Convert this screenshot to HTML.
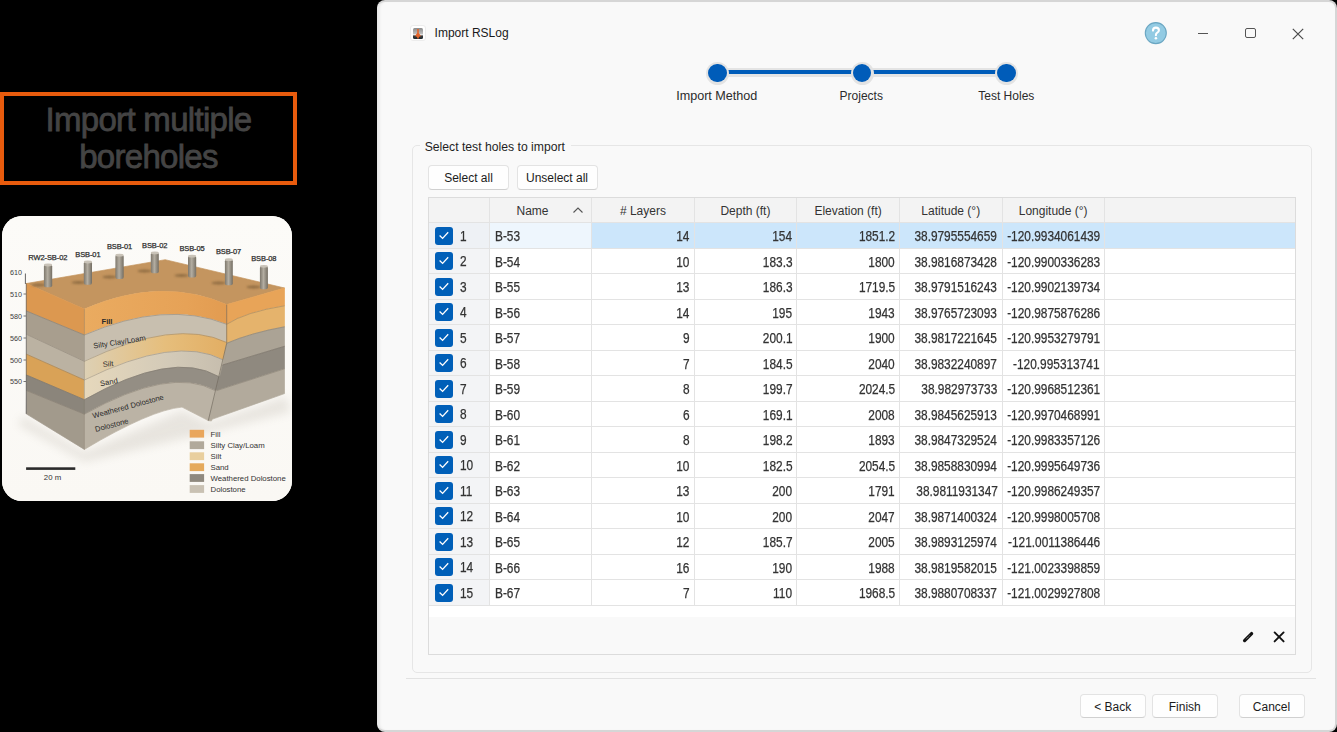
<!DOCTYPE html>
<html><head><meta charset="utf-8">
<style>
*{margin:0;padding:0;box-sizing:border-box}
html,body{width:1337px;height:732px;overflow:hidden;background:#000;font-family:"Liberation Sans",sans-serif;color:#1b1b1b}
.abs{position:absolute}
#hl{left:0;top:92px;width:297px;height:93px;border:4px solid #e85b0d;}
#hl div{position:absolute;left:0;width:289px;text-align:center;color:#444;font-size:33px;letter-spacing:-0.7px;-webkit-text-stroke:0.8px #444;white-space:nowrap;line-height:36px}
#img{left:1.5px;top:216px;width:290px;height:285px;border-radius:20px;background:#fcfbf8;overflow:hidden}
#dlg{left:377px;top:0;width:960px;height:732px;background:#f9f9f9;border-radius:8px;border:2px solid #d6d6d6;border-left:1px solid #e8e8e8;box-shadow:inset 3px 0 2px -1px #ebebeb}
.t{position:absolute;white-space:nowrap;font-size:12px;color:#1f1f1f;line-height:14px}
.hd{text-align:center;color:#333}
.td{color:#333;font-size:13.8px;line-height:15px;-webkit-text-stroke:0.25px #333}
.sl{transform:scaleX(.86);transform-origin:0 0}
.sr{transform:scaleX(.86);transform-origin:100% 0}
.btn{position:absolute;background:#fefefe;border:1px solid #e3e3e3;border-bottom-color:#d0d0d0;border-radius:4px;font-size:12px;text-align:center;color:#1b1b1b;line-height:25px}
.hl{left:429px;width:866px;height:1px;background:#e3e3e3}
.vl{width:1px;background:#e3e3e3}
.cb{width:18px;height:18px;border-radius:3px;background:#005fb8}
.cb svg{display:block}
</style></head>
<body>
<div id="hl" class="abs">
  <div style="top:6px">Import multiple</div>
  <div style="top:43.3px">boreholes</div>
</div>
<div id="img" class="abs">
<svg width="290" height="285" viewBox="1.5 216 290 285" style="display:block;font-family:'Liberation Sans',sans-serif">
<defs>
  <filter id="blur2" x="-50%" y="-100%" width="200%" height="300%"><feGaussianBlur stdDeviation="1.3"/></filter>
  <filter id="blur4" x="-50%" y="-50%" width="200%" height="200%"><feGaussianBlur stdDeviation="5"/></filter>
  <linearGradient id="bg" x1="0" y1="0" x2="0" y2="1"><stop offset="0" stop-color="#fcfbf8"/><stop offset="1" stop-color="#faf8f4"/></linearGradient>
  <linearGradient id="cyl" x1="0" y1="0" x2="1" y2="0"><stop offset="0" stop-color="#7d776c"/><stop offset="0.45" stop-color="#b3ada1"/><stop offset="1" stop-color="#746e63"/></linearGradient>
  <linearGradient id="siltm" x1="0" y1="0" x2="1" y2="0"><stop offset="0" stop-color="#ddd0b4"/><stop offset="0.55" stop-color="#e6be7c"/><stop offset="1" stop-color="#e2ad62"/></linearGradient>
  <linearGradient id="sandm" x1="0" y1="0" x2="1" y2="0"><stop offset="0" stop-color="#e6d8bc"/><stop offset="0.6" stop-color="#d3cab8"/><stop offset="1" stop-color="#c6bdad"/></linearGradient>
  <linearGradient id="fillm" x1="0" y1="0" x2="1" y2="0"><stop offset="0" stop-color="#eaab60"/><stop offset="0.7" stop-color="#e6a257"/><stop offset="1" stop-color="#e29b50"/></linearGradient>
</defs>
<rect x="1.5" y="216" width="290" height="285" fill="url(#bg)"/>
<!-- shadow -->
<path d="M22 416 L84 452 L182 410 L208 423 L286 396 L290 412 L210 432 L84 462 L18 425 Z" fill="#8a8070" opacity="0.16" filter="url(#blur4)"/>
<!-- axis -->
<path d="M24.9 273.5 V284" stroke="#555" stroke-width="0.9"/>
<g fill="#3a3a3a" font-size="7.2" text-anchor="end">
<text x="21.5" y="275">610</text><text x="21.5" y="296.6">510</text><text x="21.5" y="318.6">580</text><text x="21.5" y="340.6">560</text><text x="21.5" y="362.6">500</text><text x="21.5" y="384">550</text>
</g>
<g stroke="#555" stroke-width="0.8"><path d="M23 294 H25.5 M23 316 H25.5 M23 338 H25.5 M23 360 H25.5 M23 381.5 H25.5"/></g>
<!-- top surface -->
<path d="M25.9 283.5 L164.7 259.7 L284 288 L226.2 304.6 Q160 276 83.9 309.1 Z" fill="#c4955f" stroke="#c4955f" stroke-width="0.7" stroke-linejoin="round"/>
<!-- left face layers -->
<path d="M25.9 283.5 L83.9 309.1 L83.9 335 L25.9 311 Z" fill="#dc9850" stroke="#dc9850" stroke-width="0.7" stroke-linejoin="round"/>
<path d="M25.9 311 L83.9 335 L83.9 361.3 L25.9 334.3 Z" fill="#a89e8e" stroke="#a89e8e" stroke-width="0.7" stroke-linejoin="round"/>
<path d="M25.9 334.3 L83.9 361.3 L83.9 380 L25.9 354.2 Z" fill="#bbb2a2" stroke="#bbb2a2" stroke-width="0.7" stroke-linejoin="round"/>
<path d="M25.9 354.2 L83.9 380 L83.9 399.7 L25.9 375 Z" fill="#d9a257" stroke="#d9a257" stroke-width="0.7" stroke-linejoin="round"/>
<path d="M25.9 375 L83.9 399.7 L83.9 414.2 L25.9 390.5 Z" fill="#8b857b" stroke="#8b857b" stroke-width="0.7" stroke-linejoin="round"/>
<path d="M25.9 390.5 L83.9 414.2 L83.9 449.4 L25.7 413.8 Z" fill="#a29a8c" stroke="#a29a8c" stroke-width="0.7" stroke-linejoin="round"/>
<!-- middle face layers -->
<path d="M83.9 309.1 Q160 276 226.2 304.6 L230 305 L230 324.3 L226.2 324.3 Q165 300 83.9 335 Z" fill="url(#fillm)" stroke="url(#fillm)" stroke-width="0.7" stroke-linejoin="round"/>
<path d="M83.9 335 Q165 300 226.2 324.3 L230 324.3 L230 342.5 L226.2 342.5 Q175 318 83.9 361.3 Z" fill="#c8bfaf" stroke="#c8bfaf" stroke-width="0.7" stroke-linejoin="round"/>
<path d="M83.9 361.3 Q175 318 226.2 342.5 L230 342.5 L228 359.8 L222.5 359.8 Q175 335 83.9 380 Z" fill="url(#siltm)" stroke="url(#siltm)" stroke-width="0.7" stroke-linejoin="round"/>
<path d="M83.9 380 Q175 335 222.5 359.8 L226 359.8 L223 376.3 L217.6 376.3 Q172 350 83.9 399.7 Z" fill="url(#sandm)" stroke="url(#sandm)" stroke-width="0.7" stroke-linejoin="round"/>
<path d="M83.9 399.7 Q172 350 217.6 376.3 L222 376.3 L220 390.6 L214.6 390.6 Q170 366 83.9 414.2 Z" fill="#948e84" stroke="#948e84" stroke-width="0.7" stroke-linejoin="round"/>
<path d="M83.9 414.2 Q170 366 214.6 390.6 L219 390.6 L211 421 L207.8 420.6 L181.5 407.1 Q150 410 83.9 449.4 Z" fill="#bbb3a5" stroke="#bbb3a5" stroke-width="0.7" stroke-linejoin="round"/>
<!-- right face layers -->
<path d="M226.2 304.6 L284 288 L284 305.8 Q245 312 226.2 324.3 Z" fill="#e8a458" stroke="#e8a458" stroke-width="0.7" stroke-linejoin="round"/>
<path d="M226.2 324.3 Q245 312 284 305.8 L284 326.8 Q250 333 226.2 343.3 Z" fill="#e5b36c" stroke="#e5b36c" stroke-width="0.7" stroke-linejoin="round"/>
<path d="M226.2 343.3 Q250 333 284 326.8 L284 346.3 L222.1 365 Z" fill="#aba395" stroke="#aba395" stroke-width="0.7" stroke-linejoin="round"/>
<path d="M222.1 365 L284 346.3 L284 368.8 L216.1 390.6 Z" fill="#8f897f" stroke="#8f897f" stroke-width="0.7" stroke-linejoin="round"/>
<path d="M216.1 390.6 L284 368.8 L284 393.6 L207.8 420.6 Z" fill="#b2aa9c" stroke="#b2aa9c" stroke-width="0.7" stroke-linejoin="round"/>
<!-- layer lines -->
<g fill="none" stroke="#6f675c" stroke-width="0.45" opacity="0.8">
<path d="M25.9 311 L83.9 335 Q165 300 226.2 324.3 Q245 312 284 305.8"/>
<path d="M25.9 334.3 L83.9 361.3 Q175 318 226.2 342.5"/>
<path d="M25.9 354.2 L83.9 380 Q175 335 222.5 359.8"/>
<path d="M25.9 375 L83.9 399.7 Q172 350 217.6 376.3"/>
<path d="M25.9 390.5 L83.9 414.2 Q170 366 214.6 390.6"/>
<path d="M226.2 343.3 Q250 333 284 326.8 M222.1 365 L284 346.3 M216.1 390.6 L284 368.8"/>
<path d="M83.9 309.1 V449.4"/><path d="M25.8 283.5 V413.8" stroke="#555" stroke-width="0.8"/><path d="M226.2 304.6 V343.3 L207.8 420.6" stroke-width="0.8"/>
</g>
<!-- cylinder shadows -->
<g fill="#5e4628" opacity="0.5" filter="url(#blur2)">
<ellipse cx="38" cy="285" rx="7" ry="1.5"/><ellipse cx="78" cy="282.5" rx="7" ry="1.5"/><ellipse cx="109" cy="277" rx="7" ry="1.5"/><ellipse cx="144" cy="271" rx="7" ry="1.5"/><ellipse cx="181" cy="275.5" rx="7" ry="1.5"/><ellipse cx="218" cy="283" rx="7" ry="1.5"/><ellipse cx="253" cy="287" rx="7" ry="1.5"/>
</g>
<!-- cylinders -->
<g fill="url(#cyl)">
<rect x="43.4" y="264.6" width="8.3" height="22.6" rx="2"/>
<rect x="83.3" y="261.5" width="8.2" height="23.2" rx="2"/>
<rect x="114.9" y="254.8" width="8.3" height="24.2" rx="2"/>
<rect x="150.3" y="252.5" width="8" height="20.7" rx="2"/>
<rect x="187.5" y="255.8" width="8.2" height="21.8" rx="2"/>
<rect x="224.4" y="259.3" width="7.9" height="26" rx="2"/>
<rect x="259.4" y="265.9" width="8" height="23.3" rx="2"/>
</g>
<g fill="#c9c3b8">
<ellipse cx="47.55" cy="265" rx="4.1" ry="1.4"/><ellipse cx="87.4" cy="262" rx="4.1" ry="1.4"/><ellipse cx="119" cy="255.2" rx="4.1" ry="1.4"/><ellipse cx="154.3" cy="252.9" rx="4" ry="1.4"/><ellipse cx="191.6" cy="256.2" rx="4.1" ry="1.4"/><ellipse cx="228.3" cy="259.7" rx="3.9" ry="1.4"/><ellipse cx="263.4" cy="266.3" rx="4" ry="1.4"/>
</g>
<!-- borehole labels -->
<g fill="#2e2e2e" font-size="7.5" text-anchor="middle" stroke="#2e2e2e" stroke-width="0.25" letter-spacing="-0.1">
<text x="47.3" y="260">RW2-SB-02</text><text x="87.4" y="256.5">BSB-01</text><text x="119" y="249">BSB-01</text><text x="154.2" y="248">BSB-02</text><text x="191.5" y="251.2">BSB-05</text><text x="228" y="254.3">BSB-07</text><text x="263.3" y="260.6">BSB-08</text>
</g>
<!-- layer labels -->
<g fill="#2a2a2a" font-size="7.6">
<text x="101" y="323.5" font-weight="bold">Fill</text>
<text x="119" y="344.5" text-anchor="middle" transform="rotate(-9 119 341.8)">Silty Clay/Loam</text>
<text x="107.5" y="366.5" text-anchor="middle" transform="rotate(-6 107.5 364)">Silt</text>
<text x="108.4" y="384.7" text-anchor="middle" transform="rotate(-10 108.4 382)">Sand</text>
<text x="127.6" y="409" text-anchor="middle" transform="rotate(-15 127.6 406.4)">Weathered Dolostone</text>
<text x="111.2" y="427.6" text-anchor="middle" transform="rotate(-15 111.2 425)">Dolostone</text>
</g>
<!-- legend -->
<g>
<rect x="189.2" y="429.8" width="14.4" height="7.8" fill="#e9a65c"/>
<rect x="189.2" y="441.3" width="14.4" height="7.8" fill="#b1a99b"/>
<rect x="189.2" y="452.3" width="14.4" height="7.8" fill="#e9cf9e"/>
<rect x="189.2" y="463.3" width="14.4" height="7.8" fill="#e5aa5c"/>
<rect x="189.2" y="474.1" width="14.4" height="7.8" fill="#8f897f"/>
<rect x="189.2" y="485.1" width="14.4" height="7.8" fill="#c9c1b3"/>
</g>
<g fill="#333" font-size="7.8">
<text x="210" y="436.5">Fill</text><text x="210" y="448">Silty Clay/Loam</text><text x="210" y="459">Silt</text><text x="210" y="470">Sand</text><text x="210" y="480.8">Weathered Dolostone</text><text x="210" y="491.8">Dolostone</text>
</g>
<!-- scale bar -->
<rect x="25.6" y="467.3" width="49.2" height="2.6" fill="#2b2b2b"/>
<text x="52" y="479.5" font-size="7.8" fill="#333" text-anchor="middle">20 m</text>
</svg>
</div>
<div id="dlg" class="abs"></div>
<!-- title -->
<div class="abs" style="left:410px;top:25px;width:16px;height:16px;background:#fff;border:1px solid #ececec;border-radius:3px"></div>
<svg class="abs" style="left:413px;top:27.5px" width="10" height="11" viewBox="0 0 10 11"><defs><linearGradient id="ig" x1="0" y1="0" x2="0" y2="1"><stop offset="0" stop-color="#8c8c8c"/><stop offset="0.5" stop-color="#bdbdbd"/><stop offset="0.62" stop-color="#eeeeee"/><stop offset="0.72" stop-color="#3a3a3a"/><stop offset="1" stop-color="#1e2a30"/></linearGradient></defs><rect x="0" y="0" width="10" height="11" rx="1.5" fill="url(#ig)"/><path d="M4.2 1 H5.8 V5 L8 8 L5.8 9 V10.5 H4.2 V9 L2 8 L4.2 5 Z" fill="#e3652c"/></svg>
<div class="t" style="left:434.6px;top:26px;font-size:12px;color:#1a1a1a">Import RSLog</div>
<!-- help -->
<svg class="abs" style="left:1144px;top:21px" width="24" height="24" viewBox="0 0 24 24"><circle cx="11.8" cy="12.1" r="10.5" fill="#93cbe3" stroke="#6aa6c2" stroke-width="1.1"/><path d="M9 9.6 Q9 6.6 11.9 6.6 Q14.9 6.6 14.9 9.3 Q14.9 11 13 11.9 Q11.9 12.5 11.9 14.3" fill="none" stroke="#fff" stroke-width="2.1" stroke-linecap="round"/><circle cx="11.9" cy="17.2" r="1.3" fill="#fff"/></svg>
<!-- min max close -->
<div class="abs" style="left:1198px;top:32.7px;width:10px;height:1.2px;background:#555"></div>
<div class="abs" style="left:1245px;top:28px;width:10.8px;height:10px;border:1.4px solid #555;border-radius:2px"></div>
<svg class="abs" style="left:1292px;top:27.5px" width="12" height="12" viewBox="0 0 12 12"><path d="M0.8 0.8 L11.2 11.2 M11.2 0.8 L0.8 11.2" stroke="#4a4a4a" stroke-width="1.2"/></svg>
<!-- stepper -->
<div class="abs" style="left:717px;top:67.6px;width:290px;height:9px;background:#e4e4e4;border-radius:4px"></div>
<div class="abs" style="left:717px;top:70.4px;width:290px;height:3.8px;background:#005cb9"></div>
<div class="abs" style="left:705.8px;top:61.5px;width:23px;height:23px;border-radius:50%;background:#e3e3e3"></div>
<div class="abs" style="left:707.9px;top:63.6px;width:18.8px;height:18.8px;border-radius:50%;background:#005cb9"></div>
<div class="abs" style="left:850.5px;top:61.5px;width:23px;height:23px;border-radius:50%;background:#e3e3e3"></div>
<div class="abs" style="left:852.6px;top:63.6px;width:18.8px;height:18.8px;border-radius:50%;background:#005cb9"></div>
<div class="abs" style="left:995.0px;top:61.5px;width:23px;height:23px;border-radius:50%;background:#e3e3e3"></div>
<div class="abs" style="left:997.1px;top:63.6px;width:18.8px;height:18.8px;border-radius:50%;background:#005cb9"></div>
<div class="t" style="left:656.75px;top:89px;width:120px;text-align:center;color:#2b2b2b;font-size:12.6px">Import Method</div>
<div class="t" style="left:801.3px;top:89px;width:120px;text-align:center;color:#2b2b2b;">Projects</div>
<div class="t" style="left:946.3px;top:89px;width:120px;text-align:center;color:#2b2b2b;">Test Holes</div>
<!-- group box -->
<div class="abs" style="left:411.5px;top:145px;width:900px;height:528px;border:1px solid #e6e6e6;border-radius:5px"></div>
<div class="abs" style="left:420px;top:140px;width:151px;height:10px;background:#f9f9f9"></div>
<div class="t" style="left:424.7px;top:140px;color:#1f1f1f;font-size:12.2px">Select test holes to import</div>
<div class="btn" style="left:428px;top:165px;width:81px;height:25px">Select all</div>
<div class="btn" style="left:516.5px;top:165px;width:81px;height:25px">Unselect all</div>
<div class="abs" style="left:428px;top:197px;width:868px;height:458px;border:1px solid #dcdcdc;background:#f9f9f9"></div>
<div class="abs" style="left:429px;top:198px;width:866px;height:24.5px;background:#f3f3f3"></div>
<div class="abs" style="left:429px;top:222.5px;width:866px;height:394.5px;background:#fff"></div>
<div class="abs" style="left:429px;top:222.5px;width:60.5px;height:382.5px;background:#f3f4f6"></div>
<div class="abs" style="left:591.7px;top:222.5px;width:512.5999999999999px;height:25.5px;background:#cce6fb"></div>
<div class="abs" style="left:1104.3px;top:222.5px;width:190.70000000000005px;height:25.5px;background:#cce6fb"></div>
<div class="abs" style="left:489.5px;top:222.5px;width:102.20000000000005px;height:25.5px;background:#eef6fd"></div>
<div class="abs" style="left:429px;top:222.5px;width:60.5px;height:25.5px;background:#eef1f5"></div>
<div class="abs hl" style="top:222.00px"></div>
<div class="abs hl" style="top:247.50px"></div>
<div class="abs hl" style="top:273.00px"></div>
<div class="abs hl" style="top:298.50px"></div>
<div class="abs hl" style="top:324.00px"></div>
<div class="abs hl" style="top:349.50px"></div>
<div class="abs hl" style="top:375.00px"></div>
<div class="abs hl" style="top:400.50px"></div>
<div class="abs hl" style="top:426.00px"></div>
<div class="abs hl" style="top:451.50px"></div>
<div class="abs hl" style="top:477.00px"></div>
<div class="abs hl" style="top:502.50px"></div>
<div class="abs hl" style="top:528.00px"></div>
<div class="abs hl" style="top:553.50px"></div>
<div class="abs hl" style="top:579.00px"></div>
<div class="abs hl" style="top:604.50px"></div>
<div class="abs vl" style="left:489.00px;top:198px;height:407.5px"></div>
<div class="abs vl" style="left:591.20px;top:198px;height:407.5px"></div>
<div class="abs vl" style="left:693.70px;top:198px;height:407.5px"></div>
<div class="abs vl" style="left:796.20px;top:198px;height:407.5px"></div>
<div class="abs vl" style="left:899.00px;top:198px;height:407.5px"></div>
<div class="abs vl" style="left:1001.50px;top:198px;height:407.5px"></div>
<div class="abs vl" style="left:1103.80px;top:198px;height:407.5px"></div>
<div class="t hd" style="left:472.5px;width:120px;top:204px">Name</div>
<div class="t hd" style="left:582.95px;width:120px;top:204px"># Layers</div>
<div class="t hd" style="left:685.45px;width:120px;top:204px">Depth (ft)</div>
<div class="t hd" style="left:788.1px;width:120px;top:204px">Elevation (ft)</div>
<div class="t hd" style="left:890.75px;width:120px;top:204px">Latitude (°)</div>
<div class="t hd" style="left:993.1500000000001px;width:120px;top:204px">Longitude (°)</div>
<svg class="abs" style="left:572px;top:206px" width="12" height="8" viewBox="0 0 12 8"><path d="M1.5 6.5 L6 2 L10.5 6.5" fill="none" stroke="#555" stroke-width="1.1"/></svg>
<div class="abs cb" style="left:435.4px;top:226.70px"><svg width="18" height="18" viewBox="0 0 18 18"><path d="M4.6 8.5 L7.6 11.4 L13.2 5.3" fill="none" stroke="#fff" stroke-width="1.3"/></svg></div>
<div class="t td sl" style="left:460px;top:228.60px">1</div>
<div class="t td sl" style="left:495.3px;top:229.10px">B-53</div>
<div class="t td sr" style="right:647.40px;top:229.10px">14</div>
<div class="t td sr" style="right:544.90px;top:229.10px">154</div>
<div class="t td sr" style="right:442.10px;top:229.10px">1851.2</div>
<div class="t td sr" style="right:339.60px;top:229.10px">38.9795554659</div>
<div class="t td sr" style="right:237.30px;top:229.10px">-120.9934061439</div>
<div class="abs cb" style="left:435.4px;top:252.20px"><svg width="18" height="18" viewBox="0 0 18 18"><path d="M4.6 8.5 L7.6 11.4 L13.2 5.3" fill="none" stroke="#fff" stroke-width="1.3"/></svg></div>
<div class="t td sl" style="left:460px;top:254.10px">2</div>
<div class="t td sl" style="left:495.3px;top:254.60px">B-54</div>
<div class="t td sr" style="right:647.40px;top:254.60px">10</div>
<div class="t td sr" style="right:544.90px;top:254.60px">183.3</div>
<div class="t td sr" style="right:442.10px;top:254.60px">1800</div>
<div class="t td sr" style="right:339.60px;top:254.60px">38.9816873428</div>
<div class="t td sr" style="right:237.30px;top:254.60px">-120.9900336283</div>
<div class="abs cb" style="left:435.4px;top:277.70px"><svg width="18" height="18" viewBox="0 0 18 18"><path d="M4.6 8.5 L7.6 11.4 L13.2 5.3" fill="none" stroke="#fff" stroke-width="1.3"/></svg></div>
<div class="t td sl" style="left:460px;top:279.60px">3</div>
<div class="t td sl" style="left:495.3px;top:280.10px">B-55</div>
<div class="t td sr" style="right:647.40px;top:280.10px">13</div>
<div class="t td sr" style="right:544.90px;top:280.10px">186.3</div>
<div class="t td sr" style="right:442.10px;top:280.10px">1719.5</div>
<div class="t td sr" style="right:339.60px;top:280.10px">38.9791516243</div>
<div class="t td sr" style="right:237.30px;top:280.10px">-120.9902139734</div>
<div class="abs cb" style="left:435.4px;top:303.20px"><svg width="18" height="18" viewBox="0 0 18 18"><path d="M4.6 8.5 L7.6 11.4 L13.2 5.3" fill="none" stroke="#fff" stroke-width="1.3"/></svg></div>
<div class="t td sl" style="left:460px;top:305.10px">4</div>
<div class="t td sl" style="left:495.3px;top:305.60px">B-56</div>
<div class="t td sr" style="right:647.40px;top:305.60px">14</div>
<div class="t td sr" style="right:544.90px;top:305.60px">195</div>
<div class="t td sr" style="right:442.10px;top:305.60px">1943</div>
<div class="t td sr" style="right:339.60px;top:305.60px">38.9765723093</div>
<div class="t td sr" style="right:237.30px;top:305.60px">-120.9875876286</div>
<div class="abs cb" style="left:435.4px;top:328.70px"><svg width="18" height="18" viewBox="0 0 18 18"><path d="M4.6 8.5 L7.6 11.4 L13.2 5.3" fill="none" stroke="#fff" stroke-width="1.3"/></svg></div>
<div class="t td sl" style="left:460px;top:330.60px">5</div>
<div class="t td sl" style="left:495.3px;top:331.10px">B-57</div>
<div class="t td sr" style="right:647.40px;top:331.10px">9</div>
<div class="t td sr" style="right:544.90px;top:331.10px">200.1</div>
<div class="t td sr" style="right:442.10px;top:331.10px">1900</div>
<div class="t td sr" style="right:339.60px;top:331.10px">38.9817221645</div>
<div class="t td sr" style="right:237.30px;top:331.10px">-120.9953279791</div>
<div class="abs cb" style="left:435.4px;top:354.20px"><svg width="18" height="18" viewBox="0 0 18 18"><path d="M4.6 8.5 L7.6 11.4 L13.2 5.3" fill="none" stroke="#fff" stroke-width="1.3"/></svg></div>
<div class="t td sl" style="left:460px;top:356.10px">6</div>
<div class="t td sl" style="left:495.3px;top:356.60px">B-58</div>
<div class="t td sr" style="right:647.40px;top:356.60px">7</div>
<div class="t td sr" style="right:544.90px;top:356.60px">184.5</div>
<div class="t td sr" style="right:442.10px;top:356.60px">2040</div>
<div class="t td sr" style="right:339.60px;top:356.60px">38.9832240897</div>
<div class="t td sr" style="right:237.30px;top:356.60px">-120.995313741</div>
<div class="abs cb" style="left:435.4px;top:379.70px"><svg width="18" height="18" viewBox="0 0 18 18"><path d="M4.6 8.5 L7.6 11.4 L13.2 5.3" fill="none" stroke="#fff" stroke-width="1.3"/></svg></div>
<div class="t td sl" style="left:460px;top:381.60px">7</div>
<div class="t td sl" style="left:495.3px;top:382.10px">B-59</div>
<div class="t td sr" style="right:647.40px;top:382.10px">8</div>
<div class="t td sr" style="right:544.90px;top:382.10px">199.7</div>
<div class="t td sr" style="right:442.10px;top:382.10px">2024.5</div>
<div class="t td sr" style="right:339.60px;top:382.10px">38.982973733</div>
<div class="t td sr" style="right:237.30px;top:382.10px">-120.9968512361</div>
<div class="abs cb" style="left:435.4px;top:405.20px"><svg width="18" height="18" viewBox="0 0 18 18"><path d="M4.6 8.5 L7.6 11.4 L13.2 5.3" fill="none" stroke="#fff" stroke-width="1.3"/></svg></div>
<div class="t td sl" style="left:460px;top:407.10px">8</div>
<div class="t td sl" style="left:495.3px;top:407.60px">B-60</div>
<div class="t td sr" style="right:647.40px;top:407.60px">6</div>
<div class="t td sr" style="right:544.90px;top:407.60px">169.1</div>
<div class="t td sr" style="right:442.10px;top:407.60px">2008</div>
<div class="t td sr" style="right:339.60px;top:407.60px">38.9845625913</div>
<div class="t td sr" style="right:237.30px;top:407.60px">-120.9970468991</div>
<div class="abs cb" style="left:435.4px;top:430.70px"><svg width="18" height="18" viewBox="0 0 18 18"><path d="M4.6 8.5 L7.6 11.4 L13.2 5.3" fill="none" stroke="#fff" stroke-width="1.3"/></svg></div>
<div class="t td sl" style="left:460px;top:432.60px">9</div>
<div class="t td sl" style="left:495.3px;top:433.10px">B-61</div>
<div class="t td sr" style="right:647.40px;top:433.10px">8</div>
<div class="t td sr" style="right:544.90px;top:433.10px">198.2</div>
<div class="t td sr" style="right:442.10px;top:433.10px">1893</div>
<div class="t td sr" style="right:339.60px;top:433.10px">38.9847329524</div>
<div class="t td sr" style="right:237.30px;top:433.10px">-120.9983357126</div>
<div class="abs cb" style="left:435.4px;top:456.20px"><svg width="18" height="18" viewBox="0 0 18 18"><path d="M4.6 8.5 L7.6 11.4 L13.2 5.3" fill="none" stroke="#fff" stroke-width="1.3"/></svg></div>
<div class="t td sl" style="left:460px;top:458.10px">10</div>
<div class="t td sl" style="left:495.3px;top:458.60px">B-62</div>
<div class="t td sr" style="right:647.40px;top:458.60px">10</div>
<div class="t td sr" style="right:544.90px;top:458.60px">182.5</div>
<div class="t td sr" style="right:442.10px;top:458.60px">2054.5</div>
<div class="t td sr" style="right:339.60px;top:458.60px">38.9858830994</div>
<div class="t td sr" style="right:237.30px;top:458.60px">-120.9995649736</div>
<div class="abs cb" style="left:435.4px;top:481.70px"><svg width="18" height="18" viewBox="0 0 18 18"><path d="M4.6 8.5 L7.6 11.4 L13.2 5.3" fill="none" stroke="#fff" stroke-width="1.3"/></svg></div>
<div class="t td sl" style="left:460px;top:483.60px">11</div>
<div class="t td sl" style="left:495.3px;top:484.10px">B-63</div>
<div class="t td sr" style="right:647.40px;top:484.10px">13</div>
<div class="t td sr" style="right:544.90px;top:484.10px">200</div>
<div class="t td sr" style="right:442.10px;top:484.10px">1791</div>
<div class="t td sr" style="right:339.60px;top:484.10px">38.9811931347</div>
<div class="t td sr" style="right:237.30px;top:484.10px">-120.9986249357</div>
<div class="abs cb" style="left:435.4px;top:507.20px"><svg width="18" height="18" viewBox="0 0 18 18"><path d="M4.6 8.5 L7.6 11.4 L13.2 5.3" fill="none" stroke="#fff" stroke-width="1.3"/></svg></div>
<div class="t td sl" style="left:460px;top:509.10px">12</div>
<div class="t td sl" style="left:495.3px;top:509.60px">B-64</div>
<div class="t td sr" style="right:647.40px;top:509.60px">10</div>
<div class="t td sr" style="right:544.90px;top:509.60px">200</div>
<div class="t td sr" style="right:442.10px;top:509.60px">2047</div>
<div class="t td sr" style="right:339.60px;top:509.60px">38.9871400324</div>
<div class="t td sr" style="right:237.30px;top:509.60px">-120.9998005708</div>
<div class="abs cb" style="left:435.4px;top:532.70px"><svg width="18" height="18" viewBox="0 0 18 18"><path d="M4.6 8.5 L7.6 11.4 L13.2 5.3" fill="none" stroke="#fff" stroke-width="1.3"/></svg></div>
<div class="t td sl" style="left:460px;top:534.60px">13</div>
<div class="t td sl" style="left:495.3px;top:535.10px">B-65</div>
<div class="t td sr" style="right:647.40px;top:535.10px">12</div>
<div class="t td sr" style="right:544.90px;top:535.10px">185.7</div>
<div class="t td sr" style="right:442.10px;top:535.10px">2005</div>
<div class="t td sr" style="right:339.60px;top:535.10px">38.9893125974</div>
<div class="t td sr" style="right:237.30px;top:535.10px">-121.0011386446</div>
<div class="abs cb" style="left:435.4px;top:558.20px"><svg width="18" height="18" viewBox="0 0 18 18"><path d="M4.6 8.5 L7.6 11.4 L13.2 5.3" fill="none" stroke="#fff" stroke-width="1.3"/></svg></div>
<div class="t td sl" style="left:460px;top:560.10px">14</div>
<div class="t td sl" style="left:495.3px;top:560.60px">B-66</div>
<div class="t td sr" style="right:647.40px;top:560.60px">16</div>
<div class="t td sr" style="right:544.90px;top:560.60px">190</div>
<div class="t td sr" style="right:442.10px;top:560.60px">1988</div>
<div class="t td sr" style="right:339.60px;top:560.60px">38.9819582015</div>
<div class="t td sr" style="right:237.30px;top:560.60px">-121.0023398859</div>
<div class="abs cb" style="left:435.4px;top:583.70px"><svg width="18" height="18" viewBox="0 0 18 18"><path d="M4.6 8.5 L7.6 11.4 L13.2 5.3" fill="none" stroke="#fff" stroke-width="1.3"/></svg></div>
<div class="t td sl" style="left:460px;top:585.60px">15</div>
<div class="t td sl" style="left:495.3px;top:586.10px">B-67</div>
<div class="t td sr" style="right:647.40px;top:586.10px">7</div>
<div class="t td sr" style="right:544.90px;top:586.10px">110</div>
<div class="t td sr" style="right:442.10px;top:586.10px">1968.5</div>
<div class="t td sr" style="right:339.60px;top:586.10px">38.9880708337</div>
<div class="t td sr" style="right:237.30px;top:586.10px">-121.0029927808</div><!-- edit icons -->
<svg class="abs" style="left:1240px;top:629px" width="16" height="16" viewBox="0 0 16 16"><path d="M4.6 11.6 L11.6 4.6" stroke="#111" stroke-width="3.3" stroke-linecap="round"/><path d="M6 10.2 L10 6.2" stroke="#ddd" stroke-width="0.7" stroke-dasharray="1.2 0.6"/></svg>
<svg class="abs" style="left:1272px;top:630px" width="14" height="14" viewBox="0 0 14 14"><path d="M2.6 2.4 L11.6 11.4 M11.6 2.4 L2.6 11.4" stroke="#111" stroke-width="1.9" stroke-linecap="round"/></svg>
<!-- separator -->
<div class="abs" style="left:406px;top:678px;width:910px;height:1px;background:#e2e2e2"></div>
<div class="btn" style="left:1080px;top:693.5px;width:65.5px;height:24px">&lt; Back</div>
<div class="btn" style="left:1152px;top:693.5px;width:65.5px;height:24px">Finish</div>
<div class="btn" style="left:1238.5px;top:693.5px;width:66px;height:24px">Cancel</div>
</body></html>
